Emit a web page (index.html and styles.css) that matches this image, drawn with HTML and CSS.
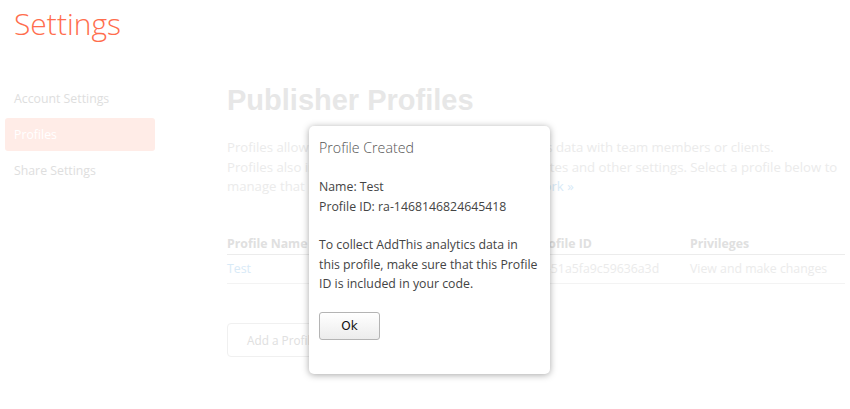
FILE: index.html
```html
<!DOCTYPE html>
<html lang="en">
<head>
<meta charset="utf-8">
<title>Settings - Publisher Profiles</title>
<link rel="stylesheet" href="styles.css">
</head>
<body>
<header class="top">
  <h1 class="brand-title">Settings</h1>
</header>
<div class="layout">
  <nav class="sidebar">
    <a class="nav-item">Account Settings</a>
    <a class="nav-item active">Profiles</a>
    <a class="nav-item">Share Settings</a>
  </nav>
  <main class="main">
    <h2 class="page-title">Publisher Profiles</h2>
    <p class="intro">Profiles allow you to securely share AddThis analytics data with team members or clients.<br>Profiles also include your tool configurations, templates and other settings. Select a profile below to<br>manage that profile's settings. <a class="link">Learn how profiles work&nbsp;&raquo;</a></p>
    <table class="profiles">
      <thead>
        <tr><th class="c-name">Profile Name</th><th class="c-id">Profile ID</th><th class="c-priv">Privileges</th></tr>
      </thead>
      <tbody>
        <tr><td><a class="link">Test</a></td><td>ra-51a5fa9c59636a3d</td><td>View and make changes</td></tr>
      </tbody>
    </table>
    <button class="add-btn">Add a Profile</button>
  </main>
</div>
<div class="modal">
  <h3 class="modal-title">Profile Created</h3>
  <p class="modal-info">Name: Test<br>Profile ID: ra-1468146824645418</p>
  <p class="modal-text">To collect AddThis analytics data in<br>this profile, make sure that this Profile<br>ID is included in your code.</p>
  <button class="ok-btn">Ok</button>
</div>
</body>
</html>
```
FILE: styles.css
```css
* { box-sizing: border-box; }
html, body { margin: 0; padding: 0; }
body {
  background: #fff;
  font-family: "Open Sans", "Liberation Sans", sans-serif;
  width: 850px;
  height: 409px;
  overflow: hidden;
  position: relative;
}
.top { padding: 3px 0 0 14px; height: 82px; }
.brand-title {
  margin: 0;
  font-weight: 300;
  font-size: 30px;
  line-height: 42px;
  color: #ff6d4d;
}
.layout {
  display: grid;
  grid-template-columns: 227px 1fr;
}
.sidebar { padding-left: 5px; width: 155px; }
.nav-item {
  display: block;
  height: 33px;
  line-height: 33px;
  margin-bottom: 3px;
  padding-left: 9px;
  font-size: 12.3px;
  color: #dedede;
  border-radius: 3px;
}
.nav-item.active { background: #ffece7; color: #fff; }
.main { padding-right: 5px; margin-top: -1px; }
.page-title {
  margin: 0;
  font-family: "Liberation Sans", Arial, sans-serif;
  font-weight: 700;
  font-size: 29px;
  line-height: 38px;
  color: #e7e7e7;
}
.intro {
  margin: 19px 0 0;
  font-size: 13.2px;
  line-height: 19.5px;
  color: #ebebeb;
  white-space: nowrap;
}
.link { color: #d8eaf7; }
.profiles {
  margin-top: 37px;
  width: 618px;
  border-collapse: collapse;
  font-size: 12.3px;
}
.profiles th {
  text-align: left;
  font-weight: 700;
  color: #e0e0e0;
  line-height: 20px;
  padding: 0;
  border-bottom: 1px solid #ececec;
}
.profiles td {
  padding: 4px 0;
  line-height: 20px;
  color: #ebebeb;
  border-bottom: 1px solid #f3f3f3;
}
.c-name { width: 308px; }
.c-id { width: 155px; }
.add-btn {
  margin-top: 39px;
  height: 34px;
  padding: 0 19px;
  font-family: inherit;
  font-size: 11.8px;
  color: #e0e0e0;
  background: #fff;
  border: 1px solid #f0f0f0;
  border-radius: 4px;
}
.modal {
  position: absolute;
  left: 309px;
  top: 126px;
  width: 241px;
  height: 248px;
  padding: 11px 10px 0;
  background: #fff;
  border-radius: 5px;
  box-shadow: 0 1px 7px rgba(0, 0, 0, 0.35);
}
.modal-title {
  margin: 0;
  font-weight: 300;
  font-size: 14.2px;
  line-height: 22px;
  color: #555;
}
.modal-info, .modal-text {
  font-size: 12.3px;
  line-height: 20px;
  color: #444;
  white-space: nowrap;
}
.modal-info { margin: 18px 0 0; }
.modal-text { margin: 18px 0 0; line-height: 19.7px; }
.ok-btn {
  margin-top: 18px;
  width: 61px;
  height: 28px;
  font-family: "DejaVu Sans", "Liberation Sans", sans-serif;
  font-size: 12px;
  color: #111;
  background: linear-gradient(#ffffff, #ececec);
  border: 1px solid #b4b4b4;
  border-radius: 3px;
}
```
